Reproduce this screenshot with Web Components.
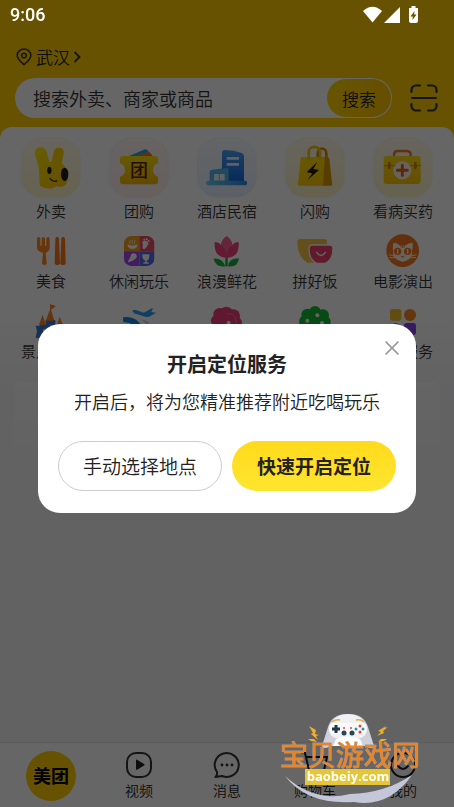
<!DOCTYPE html>
<html lang="zh-CN">
<head>
<meta charset="utf-8">
<meta name="viewport" content="width=device-width, initial-scale=1">
<title>美团</title>
<style>
  body {
    margin: 0;
    font-family: "Noto Sans CJK SC", sans-serif;
    font-weight: 350;
    color: #222;
  }
</style>
</head>
<body>
<mt-home></mt-home>

<script>
const ICONS = {
  pin: `<svg viewBox="0 0 16 18" fill="none" stroke="#443a10" stroke-width="1.6"><path d="M8 16.6C5 14 1.2 11 1.2 7.4a6.8 6.4 0 0 1 13.6 0C14.800 11 11 14 8 16.600z"/><circle cx="8" cy="7.500" r="2.300"/></svg>`,
  chevron: `<svg viewBox="0 0 8 12" fill="none" stroke="#333" stroke-width="1.800"><path d="M1.500 1l5 5-5 5"/></svg>`,
  scan: `<svg viewBox="0 0 28 28" fill="none" stroke="#333" stroke-width="2.200" stroke-linecap="round"><path d="M1.500 8V6a4.500 4.500 0 0 1 4.500-4.500h4M18 1.500h4A4.500 4.500 0 0 1 26.500 6v2M26.500 20v2a4.500 4.500 0 0 1-4.500 4.500h-4M10 26.500H6A4.500 4.500 0 0 1 1.500 22v-2M2 14h24"/></svg>`,
  close: `<svg viewBox="0 0 14 14" fill="none" stroke="#999" stroke-width="1.500"><path d="M.6.6l12.800 12.800M13.400.6L.6 13.400"/></svg>`,
  signal: `<svg viewBox="0 0 56 18" fill="#fff"><path d="M0 5Q9.500-3.500 19 5L9.500 16.500z"/><path d="M37 1v16H21z"/><path d="M46 2h2.500V0h4v2H55v13a2 2 0 0 1-2 2h-5a2 2 0 0 1-2-2z"/><path d="M51.500 5l-4 5.500h2.300L49.500 14l4-5.500h-2.300z" fill="#665200"/></svg>`,

  takeout: `<svg viewBox="0 0 180 180">
    <defs><linearGradient id="b" x2="0" y2="1"><stop stop-color="#fffbec"/><stop offset="1" stop-color="#fff6c8"/></linearGradient>
    <linearGradient id="y" x2="1" y2="1"><stop stop-color="#ffea00"/><stop offset="1" stop-color="#ffc400"/></linearGradient></defs>
    <rect x="1" y="1" width="177" height="177" rx="62" fill="url(#b)" stroke="#f5e9b5"/>
    <path d="M90 80l8-38c4-21 34-17 30 5l-9 43z" fill="#ffd300"/>
    <path d="M54 92L42 48C38 24 72 20 77 43l8 30c15-6 36-1 45 10 13 18 16 44 3 57-8 8-19 7-28 5-9 10-37 9-49-3z" fill="url(#y)"/>
    <ellipse cx="85" cy="97" rx="6.500" ry="11" fill="#222"/><ellipse cx="131" cy="109" rx="11" ry="20" fill="#1c1c1c"/>
    <path d="M87 121q8 12 20 8" fill="none" stroke="#333" stroke-width="4" stroke-linecap="round"/></svg>`,
  deals: `<svg viewBox="0 0 180 180">
    <defs><linearGradient id="b" x2="0" y2="1"><stop stop-color="#fff8f5"/><stop offset="1" stop-color="#fff0ed"/></linearGradient>
    <linearGradient id="y" x2="0" y2="1"><stop stop-color="#ffe100"/><stop offset="1" stop-color="#f5b800"/></linearGradient></defs>
    <rect x="1" y="1" width="177" height="177" rx="62" fill="url(#b)" stroke="#f1e4df"/>
    <path d="M55 56l53-22q6-2 9 4l11 20z" fill="#30a3e6"/><path d="M70 58l46-16q5-1 8 3l11 15z" fill="#f4703a"/>
    <path d="M42 54h96q9 0 9 9v13q-15 4-15 20t15 20v14q0 9-9 9H42q-9 0-9-9v-14q15-4 15-20T33 76V63q0-9 9-9z" fill="url(#y)"/>
    <text x="90" y="117" font-size="54" font-weight="500" text-anchor="middle" fill="#5a2300">团</text></svg>`,
  hotel: `<svg viewBox="0 0 180 180">
    <defs><linearGradient id="b" x2="0" y2="1"><stop stop-color="#f7faff"/><stop offset="1" stop-color="#e6f0ff"/></linearGradient>
    <linearGradient id="y" x2="0" y2="1"><stop stop-color="#4a9ff5"/><stop offset="1" stop-color="#1669df"/></linearGradient>
    <linearGradient id="l"><stop stop-color="#6bcaf5"/><stop offset="1" stop-color="#2f87e6"/></linearGradient></defs>
    <rect x="1" y="1" width="177" height="177" rx="62" fill="url(#b)" stroke="#dfe8f5"/>
    <path d="M75 132V44q0-8 9-8 27 0 50 9 7 3 7 10v77z" fill="url(#y)"/>
    <path d="M89 61h37M89 79h37" stroke="#e8f2ff" stroke-width="8"/>
    <path d="M38 132v-30q0-6 7-7l43-5q7-1 7 7v35z" fill="#51b3ed"/><path d="M51 108h32v20H51z" fill="#e8f5ff"/><path d="M67 108v20" stroke="#66b8ec" stroke-width="3"/>
    <rect x="28" y="128" width="122" height="14" rx="5" fill="url(#l)"/></svg>`,
  flash: `<svg viewBox="0 0 180 180">
    <defs><linearGradient id="b" x2="0" y2="1"><stop stop-color="#fffaea"/><stop offset="1" stop-color="#fff3c2"/></linearGradient>
    <linearGradient id="y" x2="0" y2="1"><stop stop-color="#ffdd00"/><stop offset="1" stop-color="#ffc900"/></linearGradient></defs>
    <rect x="1" y="1" width="177" height="177" rx="62" fill="url(#b)" stroke="#f4e8b9"/>
    <path d="M98 62V48c0-22 26-22 26 0v14" fill="none" stroke="#d78b08" stroke-width="8"/>
    <path d="M110 57h17q5 0 6 6l9 80h-30z" fill="#df9a00"/>
    <path d="M51 57h68l-5 86H43q-5 0-4-6l8-75q0-5 4-5z" fill="url(#y)"/>
    <path d="M71 65V44c0-23 34-23 34 0v21" fill="none" stroke="#f5c318" stroke-width="8"/>
    <path d="M97 71L65 103l17 3-14 19 34-29-17-3z" fill="#221700"/></svg>`,
  medicine: `<svg viewBox="0 0 180 180">
    <defs><linearGradient id="b" x2="0" y2="1"><stop stop-color="#fffaea"/><stop offset="1" stop-color="#fff4c8"/></linearGradient>
    <linearGradient id="y" x2="0" y2="1"><stop stop-color="#ffdd1c"/><stop offset="1" stop-color="#ffc600"/></linearGradient></defs>
    <rect x="1" y="1" width="177" height="177" rx="62" fill="url(#b)" stroke="#f4e8b9"/>
    <path d="M63 57v-7q0-11 12-11h26q12 0 12 11v7" fill="none" stroke="#ec7932" stroke-width="7"/>
    <rect x="32" y="54" width="111" height="84" rx="9" fill="url(#y)"/><path d="M32 83h111" stroke="#db9a00" stroke-width="3"/>
    <path d="M49 76v14M127 76v14" stroke="#e07a13" stroke-width="8" stroke-linecap="round"/>
    <circle cx="88" cy="97" r="27" fill="#fff7e9"/><path d="M88 82v30M73 97h30" stroke="#ed5a20" stroke-width="9" stroke-linecap="round"/></svg>`,

  food: `<svg viewBox="0 0 102 102"><g fill="#ff8420"><path d="M9 15q0-6 5-6t5 6v20h4V15q0-6 5-6t5 6v20h4V15q0-6 5-6t5 6v25c0 10-6 14-12 17l3 31q0 5-7 5t-7-5l3-31C17 54 9 50 9 40z"/><path d="M64 14c0-7 11-7 11 0l3 74c0 7-16 7-16 0zM82 14c0-7 11-7 11 0l2 74c0 7-16 7-16 0z" fill="#f97718"/></g></svg>`,
  leisure: `<svg viewBox="0 0 102 102"><clipPath id="c"><rect x="6" y="6" width="91" height="90" rx="22"/></clipPath>
    <g clip-path="url(#c)"><path d="M6 6h46v46H6z" fill="#f5a11d"/><path d="M52 6h46v46H52z" fill="#f14b69"/><path d="M6 52h46v46H6z" fill="#a247f0"/><path d="M52 52h46v46H52z" fill="#546ee9"/></g>
    <g fill="#fff"><path d="M17 31q14 7 29 0 0 11-9 13H26q-9-2-9-13z"/><path d="M25 29q-5-5 1-11M32 29q-5-6 1-12M39 29q-5-5 1-11" fill="none" stroke="#fff" stroke-width="2.500"/>
    <path d="M60 25q6-8 15-3 7 5 2 12-4 7-9 11-8 1-6-8 2-7-2-12z"/><circle cx="67" cy="17" r="3"/><circle cx="74" cy="16" r="3"/><circle cx="80" cy="21" r="3"/>
    <circle cx="35" cy="67" r="9"/><path d="M27 66l11 11-16 7-4 1 1-5z"/><path d="M61 61h21q1 17-8 19v5h6v4H64v-4h6v-5q-10-3-9-19z"/></g></svg>`,
  tulip: `<svg viewBox="0 0 102 102"><path d="M46 59h7v38h-7z" fill="#16a43c"/><path d="M46 97Q17 101 11 74q25-3 35 23zM54 97q3-26 33-23-5 27-33 23z" fill="#16b13f"/>
    <path d="M14 24q12 0 19 9 2-16 17-26 15 10 17 26 7-9 19-9 3 47-36 47T14 24z" fill="#f4437d"/><path d="M33 33q17 12 17 37 0-25 17-37-2-16-17-26-15 10-17 26z" fill="#fb6091"/></svg>`,
  groupmeal: `<svg viewBox="0 0 102 102" overflow="visible"><path d="M6 15h74q8 0 7 9-3 46-25 62H28Q-1 68-2 24q0-9 8-9z" fill="#f7c548"/><path d="M42 33h53q10 0 10 11 0 33-23 44H56Q33 77 33 44q0-11 9-11z" fill="#f3436e" stroke="#fff" stroke-width="4"/><path d="M56 55q13 19 26 0" fill="none" stroke="#fff" stroke-width="4" stroke-linecap="round"/></svg>`,
  movie: `<svg viewBox="0 0 102 102"><circle cx="50" cy="50" r="49" fill="#f57820"/><path d="M22 27q12-1 18 7h20q8-8 20-7 1 14-2 23 4 28-28 33Q17 77 22 50q-3-9 0-23z" fill="#fff4e6"/><path d="M45 33v7M50 33v9M55 33v7" stroke="#f57820" fill="none" stroke-width="3"/><circle cx="35" cy="52" r="11" fill="#f57820"/><circle cx="65" cy="52" r="11" fill="#f57820"/><path d="M35 45v14M65 45v14" stroke="#fff4e6" stroke-width="4"/><path d="M44 66q6 7 6 0 0 7 6 0" fill="none" stroke="#f57820" stroke-width="2.500"/><path d="M8 62l18 4M10 71h17M92 62l-18 4M90 71H73" stroke="#fff4e6" stroke-width="3"/></svg>`,

  castle: `<svg viewBox="0 0 102 102"><path d="M5 65h12v-4h18V48h29v13h21v42H5l4-22z" fill="#3978db"/><path d="M48 0l18 7-15 10 10 33H35L48 17zM26 32l10 31H15zM77 38l11 27H68z" fill="#f58425"/><path d="M27 76h8v12h-8zM48 64h8v15h-8z" fill="#d4e8ff"/></svg>`,
  plane: `<svg viewBox="0 0 102 102"><path d="M31 21q4-6 13-2l21 7 17-9q8-5 11-4l-5 11 14 2-15 9q-9 7-22 2L36 28z" fill="#2aa1f2"/><path d="M3 40q43-6 57 31 8 16 31 21H62Q32 51 4 55z" fill="#1688dc"/><path d="M55 46q30 2 36 31-12-14-36-31z" fill="#bad9f5"/></svg>`,
  blossom: `<svg viewBox="0 0 102 102"><g fill="#ed3c78"><circle cx="29" cy="31" r="19"/><circle cx="49" cy="28" r="20"/><circle cx="70" cy="36" r="20"/><circle cx="22" cy="51" r="19"/><circle cx="77" cy="57" r="19"/><circle cx="50" cy="60" r="30"/></g><path d="M50 30q25-8 30 28" fill="none" stroke="#ff6d9b" stroke-width="3"/><circle cx="56" cy="56" r="6" fill="#ffeef3"/></svg>`,
  tree: `<svg viewBox="0 0 102 102"><g fill="#16b835"><circle cx="51" cy="24" r="18"/><circle cx="28" cy="32" r="18"/><circle cx="75" cy="34" r="18"/><circle cx="22" cy="53" r="19"/><circle cx="79" cy="54" r="19"/><path d="M22 35h58v38H22z"/></g><g fill="#fff5e5"><circle cx="58" cy="34" r="6"/><circle cx="28" cy="50" r="6"/><circle cx="72" cy="57" r="6"/></g></svg>`,
  services: `<svg viewBox="0 0 102 102"><rect x="12" y="15" width="34" height="35" rx="8" fill="#f6bd28"/><circle cx="72" cy="33" r="18" fill="#f58a22"/><circle cx="29" cy="75" r="18" fill="#3190ef"/><rect x="54" y="57" width="36" height="36" rx="8" fill="#8848eb"/></svg>`,

  video: `<svg viewBox="0 0 28 28"><rect x="2" y="2" width="24" height="24" rx="9" fill="none" stroke="#333" stroke-width="2"/><path d="M11 9.500q0-1.500 1.500-.6l6.500 4q1.200.8 0 1.600l-6.500 4q-1.500.9-1.500-.6z" fill="#222"/></svg>`,
  message: `<svg viewBox="0 0 28 28"><path d="M4 21A12 12 0 1 1 9 25l-6.500 1Q4.500 24 4 21z" fill="none" stroke="#333" stroke-width="2" stroke-linejoin="round"/><g fill="#333"><circle cx="9" cy="14" r="1.400"/><circle cx="14" cy="14" r="1.400"/><circle cx="19" cy="14" r="1.400"/></g></svg>`,
  cart: `<svg viewBox="0 0 28 28" fill="none" stroke="#222" stroke-width="2"><path d="M0 2h4l4 17h15l3-13H5"/><circle cx="10" cy="24" r="1.500"/><circle cx="22" cy="24" r="1.500"/></svg>`,
  me: `<svg viewBox="0 0 28 28" fill="none" stroke="#222" stroke-width="2"><circle cx="14" cy="14" r="12"/><path d="M9 15q5 6 10 0" stroke-linecap="round"/></svg>`
};

class MtIcon extends HTMLElement {
  constructor() {
    super();
    this.attachShadow({ mode: "open" });
  }

  connectedCallback() {
    this.shadowRoot.innerHTML = `
    <style>
        :host{
            display: block;
            flex: none;
        }

        svg{
            display: block;
            width: 100%;
            height: 100%;
        }
    </style>
    ${ICONS[this.getAttribute("name")]}
    `;
  }
}

customElements.define("mt-icon", MtIcon);

class StatusBar extends HTMLElement {
  constructor() {
    super();

    this.attachShadow({ mode: "open" });
    this.shadowRoot.innerHTML = `
    <style>
        :host{
            position: relative;
            z-index: 3;
            display: flex;
            align-items: center;
            justify-content: space-between;
            height: 30px;
            padding: 0 35px 0 10px;
            color: white;
            font: 500 18px/32px Roboto, sans-serif;
        }

        mt-icon{
            width: 56px;
            height: 18px;
        }
    </style>
    <slot></slot>
    <mt-icon name="signal"></mt-icon>
    `;
  }
}

customElements.define("mt-status-bar", StatusBar);

class SearchHeader extends HTMLElement {
  constructor() {
    super();

    this.attachShadow({ mode: "open" });
    this.shadowRoot.innerHTML = `
    <style>
        :host{
            display: block;
            padding: 15px 16px 9px 15px;
        }

        button{
            border: 0;
            padding: 0;
            background: none;
            color: #222;
            font: inherit;
        }

        #city{
            display: flex;
            align-items: center;
            gap: 3px;
            height: 24px;
            margin-bottom: 9px;
            font-size: 17px;
            line-height: 24px;
        }

        #city mt-icon:first-child{
            width: 18px;
            height: 18px;
        }

        #city mt-icon:last-child{
            width: 8px;
            height: 12px;
        }

        #row{
            display: flex;
            align-items: center;
            gap: 18px;
        }

        form{
            flex: 1;
            min-width: 0;
            display: flex;
            box-sizing: border-box;
            height: 40px;
            padding: 1px;
            border-radius: 20px;
            background: white;
        }

        input{
            flex: 1;
            min-width: 0;
            border: 0;
            padding: 0 0 0 17px;
            background: none;
            outline: none;
            font: inherit;
            font-size: 18px;
        }

        input::placeholder{
            color: #333;
            opacity: 1;
        }

        form button{
            width: 64px;
            border-radius: 19px;
            background: linear-gradient(100deg, #ffd600, #ffc300);
            font-size: 17px;
        }

        #scan mt-icon{
            width: 28px;
            height: 28px;
        }
    </style>
    <button id="city"><mt-icon name="pin"></mt-icon><slot></slot><mt-icon name="chevron"></mt-icon></button>
    <div id="row">
        <form>
            <input type="text" placeholder="搜索外卖、商家或商品" aria-label="搜索">
            <button type="button">搜索</button>
        </form>
        <button id="scan" aria-label="扫一扫"><mt-icon name="scan"></mt-icon></button>
    </div>
    `;
  }
}

customElements.define("mt-search-header", SearchHeader);

class Category extends HTMLElement {
  constructor() {
    super();
    this.attachShadow({ mode: "open" });
  }

  connectedCallback() {
    this.shadowRoot.innerHTML = `
    <style>
        :host{
            display: block;
        }

        a{
            display: flex;
            flex-direction: column;
            align-items: center;
            gap: 3px;
            color: #333;
            font-size: 15px;
            line-height: 20px;
            text-decoration: none;
            white-space: nowrap;
        }

        mt-icon{
            width: 34px;
            height: 34px;
        }

        :host([large]) mt-icon{
            width: 60px;
            height: 60px;
        }

        span{
            min-height: 20px;
        }
    </style>
    <a href="#">
        <mt-icon name="${this.getAttribute("icon")}"></mt-icon>
        <span><slot></slot></span>
    </a>
    `;
  }
}

customElements.define("mt-category", Category);

class TabItem extends HTMLElement {
  constructor() {
    super();
    this.attachShadow({ mode: "open" });
  }

  connectedCallback() {
    const icon = this.getAttribute("icon");
    this.shadowRoot.innerHTML = `
    <style>
        :host{
            flex: 1;
            display: block;
        }

        a{
            display: flex;
            flex-direction: column;
            align-items: center;
            gap: 1px;
            color: #222;
            font-size: 14px;
            line-height: 20px;
            text-decoration: none;
        }

        mt-icon{
            width: 28px;
            height: 28px;
        }

        :host([brand]) span{
            width: 50px;
            height: 50px;
            border-radius: 50%;
            background: #ffcd00;
            color: black;
            font-size: 18px;
            font-weight: 700;
            line-height: 48px;
            text-align: center;
        }
    </style>
    <a href="#">
        ${icon ? `<mt-icon name="${icon}"></mt-icon>` : ""}
        <span><slot></slot></span>
    </a>
    `;
  }
}

customElements.define("mt-tab", TabItem);

class LocationModal extends HTMLElement {
  constructor() {
    super();

    this.attachShadow({ mode: "open" });
    this.shadowRoot.innerHTML = `
    <style>
        :host{
            position: fixed;
            inset: 0;
            z-index: 2;
            display: flex;
            align-items: center;
            justify-content: center;
            box-sizing: border-box;
            padding: 30px 38px 0;
            background: rgba(0,0,0,0.6);
        }

        :host([hidden]){
            display: none;
        }

        #modal{
            position: relative;
            box-sizing: border-box;
            width: 100%;
            max-width: 480px;
            padding: 25px 20px 22px;
            border-radius: 22px;
            background: white;
            text-align: center;
        }

        ::slotted(h1){
            margin: 0;
            font-size: 20px;
            line-height: 30px;
        }

        ::slotted(p){
            margin: 8px -10px 26px;
            font-size: 18px;
            line-height: 28px;
        }

        #actions{
            display: flex;
            gap: 10px;
        }

        button{
            border: 0;
            padding: 0;
            background: none;
            color: #222;
            font: inherit;
        }

        #actions button{
            flex: 1;
            box-sizing: border-box;
            height: 50px;
            padding-bottom: 2px;
            border-radius: 25px;
            font-size: 19px;
        }

        #actions #manual{
            border: 1px solid #ccc;
        }

        #actions #enable{
            border: 1px solid transparent;
            background: linear-gradient(#ffda1c, #ffe52f) border-box;
            font-weight: 700;
        }

        #close{
            position: absolute;
            top: 17px;
            right: 17px;
        }

        #close mt-icon{
            width: 14px;
            height: 14px;
        }
    </style>
    <div id="modal" role="dialog">
        <button id="close" aria-label="关闭"><mt-icon name="close"></mt-icon></button>
        <slot></slot>
        <section id="actions">
            <button id="manual">手动选择地点</button>
            <button id="enable">快速开启定位</button>
        </section>
    </div>
    `;

    this.shadowRoot.querySelectorAll("button").forEach((button) => {
      button.addEventListener("click", this._close.bind(this));
    });
  }

  _close() {
    this.hidden = true;
  }
}

customElements.define("mt-location-modal", LocationModal);

class Watermark extends HTMLElement {
  constructor() {
    super();

    this.attachShadow({ mode: "open" });
    this.shadowRoot.innerHTML = `
    <style>
        :host{
            position: fixed;
            right: 29px;
            bottom: 0;
            z-index: 4;
            width: 144px;
            height: 95px;
            pointer-events: none;
        }

        svg{
            display: block;
            overflow: visible;
        }
    </style>
    <svg viewBox="0 0 144 95" width="144" height="95">
        <path d="M47 15Q51 2 67 2t20 13l6 19q-1 4-9 0H50q-8 4-9 0z" fill="#cfd0da"/>
        <path d="M49 13Q54 2 67 2t18 11q3 10-5 13H54q-8-3-5-13z" fill="#f1f1f3"/>
        <path d="M51 10q4-3 8-2M75 8q5-1 8 2" fill="none" stroke="#d9b244" stroke-width="1.500"/>
        <rect x="48" y="11" width="38" height="11" rx="5" fill="#fafafb"/>
        <path d="M55 13v8M51 17h8" stroke="#213846" stroke-width="3"/>
        <g fill="#2a91ab"><circle cx="75" cy="17" r="1.500"/><circle cx="82" cy="17" r="1.500"/></g><g fill="#e53d44"><circle cx="79" cy="14" r="1.500"/><circle cx="79" cy="20" r="1.500"/><circle cx="63" cy="16" r="1"/><circle cx="70" cy="16" r="1"/></g>
        <circle cx="63" cy="21" r="2.500" fill="#29454f"/><circle cx="71" cy="21" r="2.500" fill="#29454f"/>
        <path d="M55 27q12-5 24 0l3 7H52z" fill="#fff"/>
        <path d="M28 14l7 4-1 4 4 1-3 1 2 4-7-6 2-1zM105 14l-8 5 3 1-4 4 7-3-1-2 5-4-3 1zM27 27h6l3 3-6-1zM106 27h-6l-3 3 6-1z" fill="#f1ae2b"/>
        <path d="M4 64q30 27 65 18 35-1 62-19-23 33-58 27Q26 93 4 64z" fill="#c4c7d8"/>
        <rect x="24" y="57" width="85" height="16" fill="#e5c637"/>
        <text x="69" y="54" text-anchor="middle" font-family="Noto Sans CJK SC, sans-serif" font-size="28" font-weight="400" fill="#ed8420" stroke="#b3998a" stroke-width="1" paint-order="stroke">宝贝游戏网</text>
        <text x="67" y="69" text-anchor="middle" font-family="Open Sans, sans-serif" font-size="13" font-weight="700" fill="white">baobeiy.com</text>
    </svg>
    `;
  }
}

customElements.define("mt-watermark", Watermark);

class HomePage extends HTMLElement {
  constructor() {
    super();

    this.attachShadow({ mode: "open" });
    this.shadowRoot.innerHTML = `
    <style>
        :host{
            display: flex;
            flex-direction: column;
            min-height: 100vh;
            background: #ffcd00;
        }

        main{
            flex: 1;
            padding: 11px 7px 0;
            border-radius: 12px 12px 0 0;
            background: linear-gradient(white 0, white 180px, #f5f5f8 270px);
        }

        #grid{
            display: grid;
            grid-template-columns: repeat(5, 1fr);
            gap: 13px 0;
        }

        #feed{
            height: 80px;
            margin: 21px 7px 0;
            border-radius: 6px;
            background: linear-gradient(#fcfcfc, #f5f5f8);
        }

        nav{
            display: flex;
            box-sizing: border-box;
            height: 65px;
            padding: 8px 7px 0;
            border-top: 1px solid #e6e6e6;
            background: white;
        }
    </style>
    <mt-status-bar>9:06</mt-status-bar>
    <mt-search-header>武汉</mt-search-header>
    <main>
        <div id="grid">
            <mt-category large icon="takeout">外卖</mt-category>
            <mt-category large icon="deals">团购</mt-category>
            <mt-category large icon="hotel">酒店民宿</mt-category>
            <mt-category large icon="flash">闪购</mt-category>
            <mt-category large icon="medicine">看病买药</mt-category>
            <mt-category icon="food">美食</mt-category>
            <mt-category icon="leisure">休闲玩乐</mt-category>
            <mt-category icon="tulip">浪漫鲜花</mt-category>
            <mt-category icon="groupmeal">拼好饭</mt-category>
            <mt-category icon="movie">电影演出</mt-category>
            <mt-category icon="castle">景点门票</mt-category>
            <mt-category icon="plane"></mt-category>
            <mt-category icon="blossom"></mt-category>
            <mt-category icon="tree"></mt-category>
            <mt-category icon="services">全部服务</mt-category>
        </div>
        <div id="feed"></div>
    </main>
    <nav>
        <mt-tab brand>美团</mt-tab>
        <mt-tab icon="video">视频</mt-tab>
        <mt-tab icon="message">消息</mt-tab>
        <mt-tab icon="cart">购物车</mt-tab>
        <mt-tab icon="me">我的</mt-tab>
    </nav>
    <mt-location-modal>
        <h1>开启定位服务</h1>
        <p>开启后，将为您精准推荐附近吃喝玩乐</p>
    </mt-location-modal>
    <mt-watermark></mt-watermark>
    `;
  }
}

customElements.define("mt-home", HomePage);
</script>
</body>
</html>
